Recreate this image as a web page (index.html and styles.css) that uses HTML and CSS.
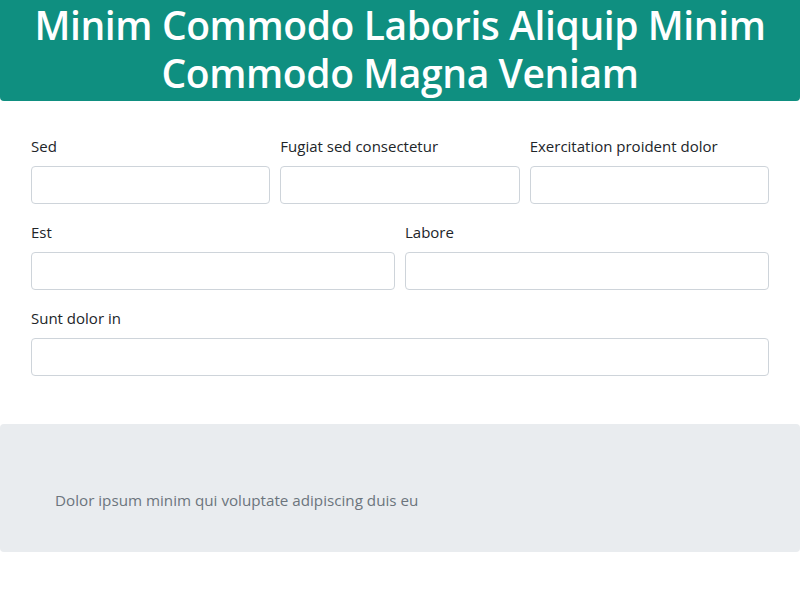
FILE: index.html
```html
<!DOCTYPE html>
<html>
<head>
<meta charset="utf-8">
<link rel="stylesheet" href="styles.css">
</head>
<body>
<header class="banner">
  <h1 class="banner-title">Minim Commodo Laboris Aliquip Minim Commodo Magna Veniam</h1>
</header>
<form class="form">
  <div class="row row-3">
    <div class="field"><label class="label">Sed</label><input class="input" type="text"></div>
    <div class="field"><label class="label">Fugiat sed consectetur</label><input class="input" type="text"></div>
    <div class="field"><label class="label">Exercitation proident dolor</label><input class="input" type="text"></div>
  </div>
  <div class="row row-2">
    <div class="field"><label class="label">Est</label><input class="input" type="text"></div>
    <div class="field"><label class="label">Labore</label><input class="input" type="text"></div>
  </div>
  <div class="row row-1">
    <div class="field"><label class="label">Sunt dolor in</label><input class="input" type="text"></div>
  </div>
</form>
<section class="note">
  <p class="note-text">Dolor ipsum minim qui voluptate adipiscing duis eu</p>
</section>
</body>
</html>
```
FILE: styles.css
```css
* { box-sizing: border-box; }
body {
  margin: 0;
  font-family: "Open Sans", "Noto Sans", sans-serif;
  font-size: 16px;
  line-height: 1.5;
  color: #212529;
  background: #fff;
}
.banner {
  background: #0f8f80;
  border-radius: 0 0 4px 4px;
  padding: 1px 4px 4px;
  text-align: center;
}
.banner-title {
  margin: 0;
  color: #fff;
  font-size: 39px;
  font-weight: 600;
  line-height: 48px;
  letter-spacing: -0.4px;
}
.form {
  padding: 33px 31px 32px;
}
.row {
  display: grid;
  gap: 10px;
  margin-bottom: 16px;
}
.row-3 { grid-template-columns: 1fr 1fr 1fr; }
.row-2 { grid-template-columns: 1fr 1fr; }
.row-1 { grid-template-columns: 1fr; }
.field { display: flex; flex-direction: column; }
.label {
  display: block;
  margin-bottom: 8px;
  font-size: 15px;
  line-height: 24px;
}
.input {
  height: 38px;
  border: 1px solid #ced4da;
  border-radius: 4px;
  padding: 6px 12px;
  font: inherit;
  background: #fff;
}
.note {
  background: #e9ecef;
  border-radius: 4px;
  padding: 64px 55px 40px;
}
.note-text {
  margin: 0;
  color: #6c757d;
  font-size: 15.2px;
  line-height: 24px;
}
```
